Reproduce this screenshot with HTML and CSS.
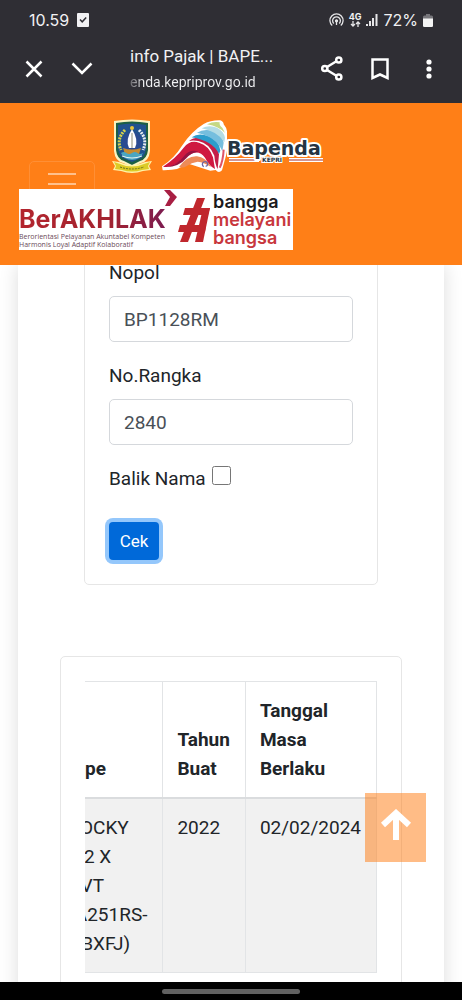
FILE: index.html
```html
<!DOCTYPE html>
<html lang="id">

<head>
  <meta charset="UTF-8">
  <meta name="viewport" content="width=device-width, initial-scale=1.0">
  <title>info Pajak | BAPENDA</title>
  <link rel="stylesheet" href="styles.css">
</head>

<body>
  <header class="browser">
    <div class="status-bar">
      <span>10.59</span>
      <svg width="12" height="14" viewBox="0 0 12 14">
        <rect width="12" height="14" rx="1" fill="#f1f1f3" />
        <path d="M3 6.500l2.200 2.300L9.200 4.500" fill="none" stroke="#2f2e34" stroke-width="1.500" />
      </svg>
      <div class="status-icons">
        <svg width="15" height="14" viewBox="0 0 15 14" fill="none" stroke="#e6e6e8" stroke-width="1.300">
          <path d="M3.200 12.500a6.600 6.600 0 1 1 8.600 0" />
          <path d="M4.800 10.500a3.900 3.900 0 1 1 5.400 0" />
          <circle cx="7.500" cy="7.800" r="1" fill="#e6e6e8" />
          <path d="M7.500 8v4" />
        </svg>
        <div class="network">
          <span>4G</span>
          <svg width="11" height="6" viewBox="0 0 11 6" fill="none" stroke="#e6e6e8" stroke-width="1.300">
            <path d="M3 0v5M1 3l2 2 2-2M8 6V1M6 3l2-2 2 2" />
          </svg>
        </div>
        <svg width="12" height="12" viewBox="0 0 12 12" fill="#e6e6e8">
          <rect x="0" y="10" width="2" height="2" />
          <rect x="3" y="7" width="2" height="5" />
          <rect x="6" y="4" width="2" height="8" />
          <rect x="9.500" y="0" width="2" height="12" />
        </svg>
        <span>72%</span>
        <svg width="10" height="13" viewBox="0 0 10 13">
          <path d="M3 0h4v1.500h1.500q1.500 0 1.500 1.500v8.500q0 1.500-1.500 1.500h-7q-1.500 0-1.500-1.500V3q0-1.500 1.500-1.500H3z" fill="#77767b" />
          <path d="M0 4.500h10v7q0 1.500-1.500 1.500h-7q-1.500 0-1.500-1.500z" fill="#f4f4f4" />
        </svg>
      </div>
    </div>
    <div class="toolbar">
      <button class="icon-button" aria-label="Tutup">
        <svg width="18" height="18" viewBox="0 0 18 18"><path d="M1.500 1.500l15 15M16.500 1.500l-15 15" /></svg>
      </button>
      <button class="icon-button" aria-label="Perkecil">
        <svg width="22" height="14" viewBox="0 0 22 14"><path d="M1.500 1.500L11 11l9.500-9.500" /></svg>
      </button>
      <div class="page-info">
        <div class="page-title">info Pajak | BAPE...</div>
        <div class="page-url">enda.kepriprov.go.id</div>
      </div>
      <button class="icon-button" aria-label="Bagikan">
        <svg width="22" height="25" viewBox="0 0 22 25">
          <path d="M6 11l9-5.500M6 14l9 5.500" />
          <circle cx="3.800" cy="12.500" r="2.600" />
          <circle cx="17.800" cy="4" r="2.600" />
          <circle cx="17.800" cy="21" r="2.600" />
        </svg>
      </button>
      <button class="icon-button" aria-label="Simpan">
        <svg width="18" height="22" viewBox="0 0 18 22"><path d="M1.500 1.500h15v18.500L9 16.500 1.500 20z" /></svg>
      </button>
      <button class="icon-button" aria-label="Menu">
        <svg class="dots" width="6" height="20" viewBox="0 0 6 20">
          <circle cx="3" cy="3" r="2.600" />
          <circle cx="3" cy="10" r="2.600" />
          <circle cx="3" cy="17" r="2.600" />
        </svg>
      </button>
    </div>
  </header>

  <nav class="navbar">
    <a class="brand" href="#" aria-label="Bapenda Kepri">
      <!-- lambang provinsi -->
      <svg width="42" height="55" viewBox="0 0 42 55">
        <path d="M3 2Q21-1 39 2V32Q38 42 30 44L21 48 12 44Q4 42 3 32z" fill="#fbf3c0" />
        <path d="M5 4Q21 1 37 4V31Q36 40 29 42L21 46 13 42Q6 40 5 31z" fill="#1c5f45" />
        <path d="M7 6Q21 3 35 6V30Q34 38 28 40L21 43 14 40Q8 38 7 30z" fill="#21528f" />
        <path d="M14 11Q5 20 10 31" fill="none" stroke="#d9d34a" stroke-width="3" stroke-dasharray="2 1" />
        <path d="M28 11Q37 20 32 31" fill="none" stroke="#e9eef0" stroke-width="3" stroke-dasharray="2 1" />
        <circle cx="21" cy="23" r="10" fill="#2a4b91" />
        <path d="M21 10Q14 21 18 29h6Q28 21 21 10z" fill="#fff" />
        <path d="M21 14v15" stroke="#8b8b77" stroke-width="1" />
        <circle cx="21" cy="9" r="2" fill="#e8c63a" />
        <path d="M12 29q9 3 18 0l-2 6H14z" fill="#c78b30" />
        <path d="M10 34q3-2 5.500 0t5.500 0 5.500 0 5.500 0q-3 7-11 7t-11-7z" fill="#4aa6c2" />
        <path d="M11 37q10 4 20 0" fill="none" stroke="#e9f4f2" stroke-width="1" />
        <path d="M1 42l7 1q13 6 26 0l7-1-3 5 2 4-8 1q-11 4-22 0l-8-1 2-4z" fill="#fff3a8" />
        <path d="M3 43l6 2q12 5 24 0l6-2-2 4 1 3-7 1q-10 3-20 0l-7-1 1-3z" fill="#dccb27" />
        <path d="M9 48q12 4 24 0" fill="none" stroke="#66701f" stroke-width="1" stroke-dasharray="2 1" />
      </svg>
      <svg width="66" height="56" viewBox="0 0 198 168">
        <path d="M3 142Q40 118 62 82 90 38 128 15 150 3 178 4q10 4 10 12 12 14 10 30 5 14 0 28 2 20-3 36l-12 44q-10 10-19-1l-16 2-70-22q-20 22-73 21z" fill="#fff" />
        <path d="M6 143Q44 118 68 86q20-25 46-15 30 8 42 44l6 35q-18-10-30-34-14-20-36-14-22 9-44 28-20 17-46 13z" fill="#cf1840" />
        <path d="M10 144q36-2 60-34 18-22 42-12-22 2-36 20-24 28-66 26z" fill="#961340" />
        <path d="M54 144q24-34 54-32 26 2 42 32-20-14-40-16-18 2-34 14-10 6-22 2z" fill="#ed8b58" />
        <path d="M84 66q20-16 48-6 34 12 42 46l-4 44q-8-14-10-40-16-38-48-44-16-3-28 0z" fill="#c41e48" />
        <path d="M92 55q20-15 50-4 32 12 36 44l-4 10Q156 66 92 55z" fill="#2c9dcc" />
        <path d="M108 41q22-14 50-4 26 10 30 34l-4 26Q166 53 108 41z" fill="#75bede" />
        <path d="M122 28q22-12 46-2 20 10 24 30l-2 14Q172 38 122 28z" fill="#b4dce5" />
        <path d="M138 16q20-10 38-6-2 10 8 16l8 16Q174 22 138 16z" fill="#c5d884" />
        <path d="M128 143q-8-8 0-14 10-4 12 6 0 6-6 7" fill="none" stroke="#6a65a4" stroke-width="4" />
        <path d="M188 92q-2 36-12 54" fill="none" stroke="#df5367" stroke-width="6" />
      </svg>
      <svg width="100" height="56" viewBox="0 0 100 56">
        <path d="M2 41h30M62 41h34" stroke="#fff" stroke-width="4" />
        <path d="M2 41h30M62 41h34" stroke="#a72c26" stroke-width="1" />
        <text class="brand-name" x="0" y="36">Bapenda</text>
        <text class="brand-sub" x="35" y="43">KEPRI</text>
      </svg>
    </a>
    <button class="toggler" aria-label="Buka menu"><span></span><span></span></button>
    <div class="banner">
      <div class="akhlak">
        <div class="akhlak-name">BerAKHLAK</div>
        <p>Berorientasi Pelayanan Akuntabel Kompeten</p>
        <p>Harmonis Loyal Adaptif Kolaboratif</p>
      </div>
      <svg class="akhlak-arrow" width="14" height="18" viewBox="0 0 14 18"><path d="M0 1h6l7 7-7 9H1l5-9z" fill="#a81f43" /></svg>
      <svg width="32" height="46" viewBox="0 0 32 46" fill="#c0272d">
        <path d="M19 1h8L10 45H2z" />
        <path d="M25 11h7l-7 34h-8z" />
        <path d="M7 11h25l-2 7H5z" />
        <path d="M2 28h26l-1 7H0z" />
      </svg>
      <div class="bangga">
        <span>bangga</span>
        <span>melayani</span>
        <span>bangsa</span>
      </div>
    </div>
  </nav>

  <main class="content">
    <div class="page">
      <form class="card form-card">
        <div class="form-group">
          <label for="nopol">Nopol</label>
          <input class="form-control" type="text" id="nopol" value="BP1128RM">
        </div>
        <div class="form-group">
          <label for="rangka">No.Rangka</label>
          <input class="form-control" type="text" id="rangka" value="2840">
        </div>
        <div class="form-check">
          <label for="balik">Balik Nama</label>
          <input type="checkbox" id="balik">
        </div>
        <button class="btn" type="button">Cek</button>
      </form>

      <div class="card result-card">
        <!-- tabel digeser ke kolom paling kanan -->
        <div class="table-responsive">
          <table>
            <thead>
              <tr>
                <th>Tipe</th>
                <th>Tahun Buat</th>
                <th>Tanggal Masa Berlaku</th>
              </tr>
            </thead>
            <tbody>
              <tr>
                <td>ROCKY 1.2 X CVT (A251RS-GBXFJ)</td>
                <td>2022</td>
                <td>02/02/2024</td>
              </tr>
            </tbody>
          </table>
        </div>
      </div>
    </div>
  </main>

  <a class="back-to-top" href="#" aria-label="Kembali ke atas">
    <svg width="32" height="34" viewBox="0 0 32 34"><path d="M16 31V4M3 16L16 4l13 12" /></svg>
  </a>

  <footer class="gesture-bar"><span></span></footer>
</body>

</html>
```

FILE: styles.css
```css
* {
  margin: 0;
  padding: 0;
  box-sizing: border-box;
}

body {
  display: flex;
  flex-direction: column;
  height: 100vh;
  overflow: hidden;
  font-family: Roboto, "Liberation Sans", sans-serif;
  font-size: 19px;
  line-height: 29px;
  color: #212529;
  background-color: #fff;
}

svg {
  display: block;
  flex-shrink: 0;
}

button {
  font-family: inherit;
  cursor: pointer;
}

/* Browser */
.browser {
  flex-shrink: 0;
  background-color: #2f2e34;
  color: #f1f1f3;
}

.status-bar {
  display: flex;
  align-items: center;
  gap: 8px;
  height: 40px;
  padding: 0 29px;
  font-family: Inter, sans-serif;
  font-size: 16px;
}

.status-icons {
  display: flex;
  align-items: center;
  gap: 5px;
  margin-left: auto;
}

.network {
  display: flex;
  flex-direction: column;
  align-items: center;
  font-size: 9px;
  font-weight: 700;
  line-height: 8px;
}

.toolbar {
  display: flex;
  align-items: center;
  height: 63px;
  padding: 0 20px 6px;
}

.icon-button {
  display: flex;
  align-items: center;
  justify-content: center;
  width: 28px;
  height: 40px;
  margin-right: 20px;
  border: none;
  background: none;
}

.icon-button:last-child {
  width: 18px;
  margin-left: 6px;
  margin-right: 4px;
}

.icon-button svg {
  fill: none;
  stroke: #fff;
  stroke-width: 2.5;
}

.icon-button .dots {
  fill: #fff;
  stroke: none;
}

.page-info {
  flex: 1;
  min-width: 0;
  margin-left: 14px;
}

.page-title {
  font-size: 17px;
  line-height: 26px;
  white-space: nowrap;
}

.page-url {
  font-size: 14px;
  line-height: 26px;
  background: linear-gradient(to right, #66656a, #f1f1f3 14px);
  background-clip: text;
  color: transparent;
}

/* Navbar */
.navbar {
  position: relative;
  flex-shrink: 0;
  padding: 16px 19px 15px;
  background-color: #ff7f17;
}

.brand {
  display: flex;
  margin-left: 92px;
}

.brand svg:first-child {
  margin-right: 8px;
}

.brand-name {
  font-family: "DejaVu Sans", sans-serif;
  font-size: 19px;
  font-weight: 700;
  fill: #263442;
  stroke: #fff;
  stroke-width: 4px;
  stroke-linejoin: round;
  paint-order: stroke;
}

.brand-sub {
  font-family: "DejaVu Sans", sans-serif;
  font-size: 6px;
  font-weight: 700;
  fill: #263442;
  stroke: #fff;
  stroke-width: 2px;
  paint-order: stroke;
}

.toggler {
  display: flex;
  flex-direction: column;
  gap: 8px;
  width: 66px;
  height: 46px;
  margin: -14px 0 0 10px;
  padding: 11px 18px;
  border: 1px solid #ff8f35;
  border-radius: 5px;
  background: none;
}

.toggler span {
  height: 2px;
  background-color: #ffc08c;
}

.banner {
  position: relative;
  display: flex;
  align-items: center;
  width: 274px;
  height: 61px;
  margin-top: -18px;
  background-color: #fff;
}

.akhlak {
  width: 145px;
  padding-top: 14px;
  font-family: "Open Sans", sans-serif;
}

.akhlak-name {
  width: max-content;
  font-family: Inter, sans-serif;
  font-size: 25px;
  font-weight: 700;
  line-height: 28px;
  background: linear-gradient(to right, #b3252e, #a3232f 60%, #7c1c50);
  background-clip: text;
  color: transparent;
}

.akhlak p {
  font-size: 7px;
  line-height: 8px;
  color: #6b4a58;
  white-space: nowrap;
}

.akhlak-arrow {
  align-self: flex-start;
}

.bangga {
  display: flex;
  flex-direction: column;
  margin-left: 3px;
  font-family: Inter, sans-serif;
  font-size: 18px;
  font-weight: 600;
  line-height: 18px;
  color: #c8373d;
}

.bangga span:first-child {
  color: #1c1a1c;
}

/* Konten */
.content {
  flex: 1;
  min-height: 0;
  overflow: hidden;
  padding: 0 18px;
}

.page {
  display: flow-root;
  padding: 0 42px;
  background-color: #fff;
  box-shadow: 0 0 18px rgba(0, 0, 0, 0.14);
}

.card {
  border: 1px solid #e6e6e6;
  border-radius: 5px;
}

/* bagian atas form tertutup navbar */
.form-card {
  margin: -32px 24px 71px;
  padding: 24px;
}

.form-group {
  margin-bottom: 19px;
}

.form-group label {
  display: block;
  margin-bottom: 9px;
}

.form-control {
  display: block;
  width: 100%;
  height: 46px;
  padding: 0 14px;
  border: 1px solid #d5d8dc;
  border-radius: 5px;
  font-family: inherit;
  font-size: 19px;
  color: #495057;
}

.form-check {
  display: flex;
  gap: 6px;
  margin-bottom: 29px;
}

.form-check input {
  width: 19px;
  height: 19px;
  margin-top: 2px;
}

.btn {
  display: block;
  width: 50px;
  height: 38px;
  border: none;
  border-radius: 4px;
  background-color: #0069d9;
  box-shadow: 0 0 0 4px #94c7fb;
  color: #fff;
  font-size: 17px;
}

.result-card {
  padding: 24px 24px 40px;
}

.table-responsive {
  display: flex;
  justify-content: flex-end;
  overflow: hidden;
}

table {
  flex-shrink: 0;
  width: min-content;
  border-collapse: collapse;
}

th,
td {
  padding: 14px 15px 14px 14px;
  border: 1px solid #e2e4e6;
  text-align: left;
  vertical-align: top;
}

th {
  border-bottom: 2px solid #dadcde;
  vertical-align: bottom;
}

tbody tr {
  background-color: #f1f1f1;
}

.back-to-top {
  position: fixed;
  right: 36px;
  bottom: 138px;
  display: flex;
  justify-content: center;
  width: 61px;
  height: 69px;
  padding-top: 16px;
  background-color: rgba(255, 127, 23, 0.52);
}

.back-to-top path {
  fill: none;
  stroke: #fff;
  stroke-width: 6;
}

.gesture-bar {
  display: flex;
  align-items: center;
  justify-content: center;
  flex-shrink: 0;
  height: 18px;
  background-color: #000;
}

.gesture-bar span {
  width: 138px;
  height: 5px;
  border-radius: 3px;
  background-color: #616161;
}
```
